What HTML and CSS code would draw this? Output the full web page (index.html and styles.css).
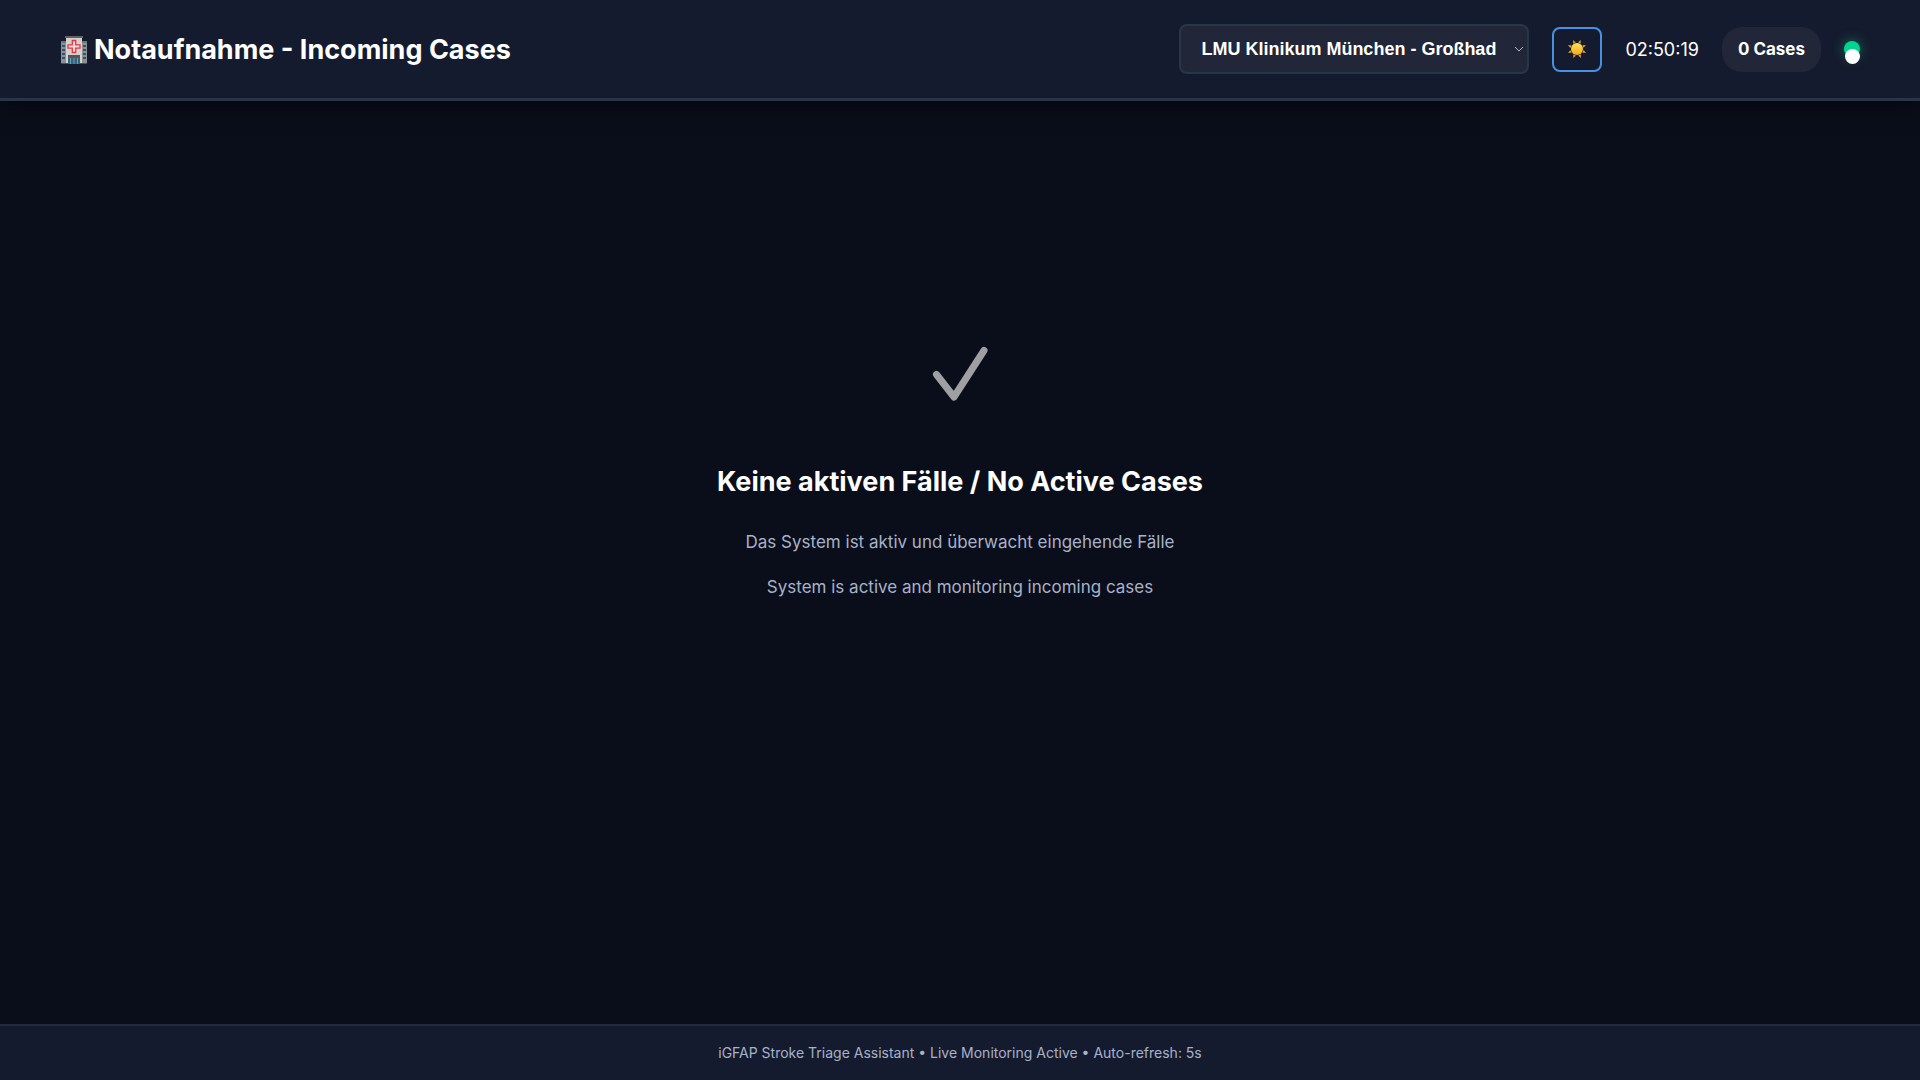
FILE: index.html
```html
<!DOCTYPE html>
<html lang="de">
<head>
<meta charset="utf-8">
<meta name="viewport" content="width=device-width, initial-scale=1">
<title>Notaufnahme - Incoming Cases</title>
<link rel="stylesheet" href="styles.css">
</head>
<body>
<header class="header">
  <h1 class="title">
    <svg class="title-icon" viewBox="0 0 26 28" aria-hidden="true">
      <path fill="#6e7678" d="M0 5h5v23H0zM21 5h5v23h-5z"/>
      <path fill="#8b9293" d="M0 7h5v20H0zM21 7h5v20h-5z"/>
      <path fill="#33536c" d="M1 9h3v2H1zM1 13h3v2H1zM1 17h3v2H1zM1 21h3v2H1zM22 9h3v2h-3zM22 13h3v2h-3zM22 17h3v2h-3zM22 21h3v2h-3z"/>
      <path fill="#d4d2ce" d="M5 1h16v27H5z"/>
      <path fill="#675f5c" d="M4 0h18v2H4z"/>
      <path fill="#5b5350" d="M7 19h12v2H7z"/>
      <path fill="#35657c" d="M7 21h12v7H7z"/>
      <path fill="#6ba0b3" d="M9 22h1v6H9zM12.500 22h1v6h-1zM16 22h1v6h-1z"/>
      <path fill="#f3d9d7" stroke="#e73546" stroke-width="1.300" d="M11.300 4.500h3.400v4.300H19v3.400h-4.300v4.300h-3.400v-4.300H7V8.800h4.300z"/>
      <path fill="#544d49" d="M0 27h7v1H0zM19 27h7v1h-7z"/>
    </svg>
    Notaufnahme - Incoming Cases
  </h1>
  <div class="controls">
    <div class="hospital">
      <select class="hospital-select" aria-label="Krankenhaus">
        <option>LMU Klinikum München - Großhadern</option>
      </select>
      <svg class="hospital-arrow" viewBox="0 0 10 6" aria-hidden="true">
        <path d="M1 1l4 4 4-4"/>
      </svg>
    </div>
    <button class="theme" type="button" aria-label="Helles Design">
      <svg class="sun" viewBox="0 0 20 20" aria-hidden="true">
        <defs>
          <linearGradient id="sun-fill" x1="0" y1="0" x2="0" y2="1">
            <stop offset="0" stop-color="#ffe45a"/>
            <stop offset="1" stop-color="#f9a51a"/>
          </linearGradient>
        </defs>
        <g fill="#d9a431">
          <path id="ray" d="M8.600 3.600 10 .2l1.400 3.400z" transform="rotate(22 10 10)"/>
          <use href="#ray" transform="rotate(45 10 10)"/>
          <use href="#ray" transform="rotate(90 10 10)"/>
          <use href="#ray" transform="rotate(135 10 10)"/>
          <use href="#ray" transform="rotate(180 10 10)"/>
          <use href="#ray" transform="rotate(225 10 10)"/>
          <use href="#ray" transform="rotate(270 10 10)"/>
          <use href="#ray" transform="rotate(315 10 10)"/>
        </g>
        <circle cx="10" cy="10" r="6" fill="url(#sun-fill)"/>
      </svg>
    </button>
    <time class="clock">02:50:19</time>
    <span class="count">0 Cases</span>
    <span class="status" role="img" aria-label="Verbunden"></span>
  </div>
</header>
<main class="main">
  <svg class="check" viewBox="0 0 64 64" aria-hidden="true">
    <path d="M8.500 34.500 26 57 56 10.500"/>
  </svg>
  <h2 class="heading">Keine aktiven Fälle / No Active Cases</h2>
  <p class="note">Das System ist aktiv und überwacht eingehende Fälle</p>
  <p class="note">System is active and monitoring incoming cases</p>
</main>
<footer class="footer">iGFAP Stroke Triage Assistant • Live Monitoring Active • Auto-refresh: 5s</footer>
</body>
</html>
```
FILE: styles.css
```css
* {
  box-sizing: border-box;
  margin: 0;
}

body {
  display: flex;
  flex-direction: column;
  min-height: 100vh;
  background: #0a0e1a;
  color: #fff;
  font: 17px/29px Inter, "Liberation Sans", sans-serif;
}

.header {
  display: flex;
  justify-content: space-between;
  align-items: center;
  padding: 24px 60px;
  background: #151b2e;
  border-bottom: 3px solid #2a3548;
  box-shadow: 0 4px 20px rgba(0, 0, 0, 0.5);
}

.title {
  display: flex;
  align-items: center;
  gap: 6px;
  padding-top: 2px;
  font-size: 27px;
  line-height: 46px;
  font-weight: 700;
}

.title-icon {
  width: 28px;
  height: 28px;
}

.controls {
  display: flex;
  align-items: center;
  gap: 23px;
}

.hospital {
  position: relative;
  width: 350px;
}

.hospital-select {
  appearance: none;
  width: 100%;
  height: 50px;
  padding: 0 31px 0 20px;
  border: 2px solid #2a3548;
  border-radius: 8px;
  background: #212638;
  color: #fff;
  font: 700 18px "Liberation Sans", sans-serif;
}

.hospital-arrow {
  position: absolute;
  top: 22px;
  right: 5px;
  width: 10px;
  height: 6px;
  fill: none;
  stroke: #b4b7be;
  pointer-events: none;
}

.theme {
  display: flex;
  align-items: center;
  justify-content: center;
  width: 50px;
  height: 45px;
  padding: 0;
  border: 2px solid #4a90e2;
  border-radius: 8px;
  background: transparent;
}

.sun {
  width: 20px;
  height: 20px;
}

.clock {
  font-size: 18px;
}

.count {
  padding: 8px 16px;
  border-radius: 20px;
  background: #212638;
  font-weight: 700;
}

.status {
  position: relative;
  width: 16px;
  height: 16px;
  border-radius: 50%;
  background: #00d68f;
  box-shadow: 0 0 12px rgba(0, 214, 143, 0.5);
}

.status::after {
  content: "";
  position: absolute;
  top: 8px;
  left: 1px;
  width: 15px;
  height: 15px;
  border-radius: 50%;
  background: #fff;
}

.main {
  flex: 1;
  display: flex;
  flex-direction: column;
  align-items: center;
  gap: 16px;
  padding: 239px 60px 60px;
  text-align: center;
}

.check {
  width: 64px;
  height: 64px;
  margin-bottom: 39px;
  fill: none;
  stroke: #9fa0a4;
  stroke-width: 7;
  stroke-linecap: round;
  stroke-linejoin: round;
}

.heading {
  font-size: 27px;
  line-height: 45px;
  font-weight: 700;
  margin-bottom: 8px;
}

.note {
  color: #a8b2c8;
}

.footer {
  padding: 16px 60px;
  border-top: 2px solid #222b3d;
  background: #151b2e;
  color: #a8b2c8;
  font-size: 14px;
  line-height: 22px;
  text-align: center;
}
```
